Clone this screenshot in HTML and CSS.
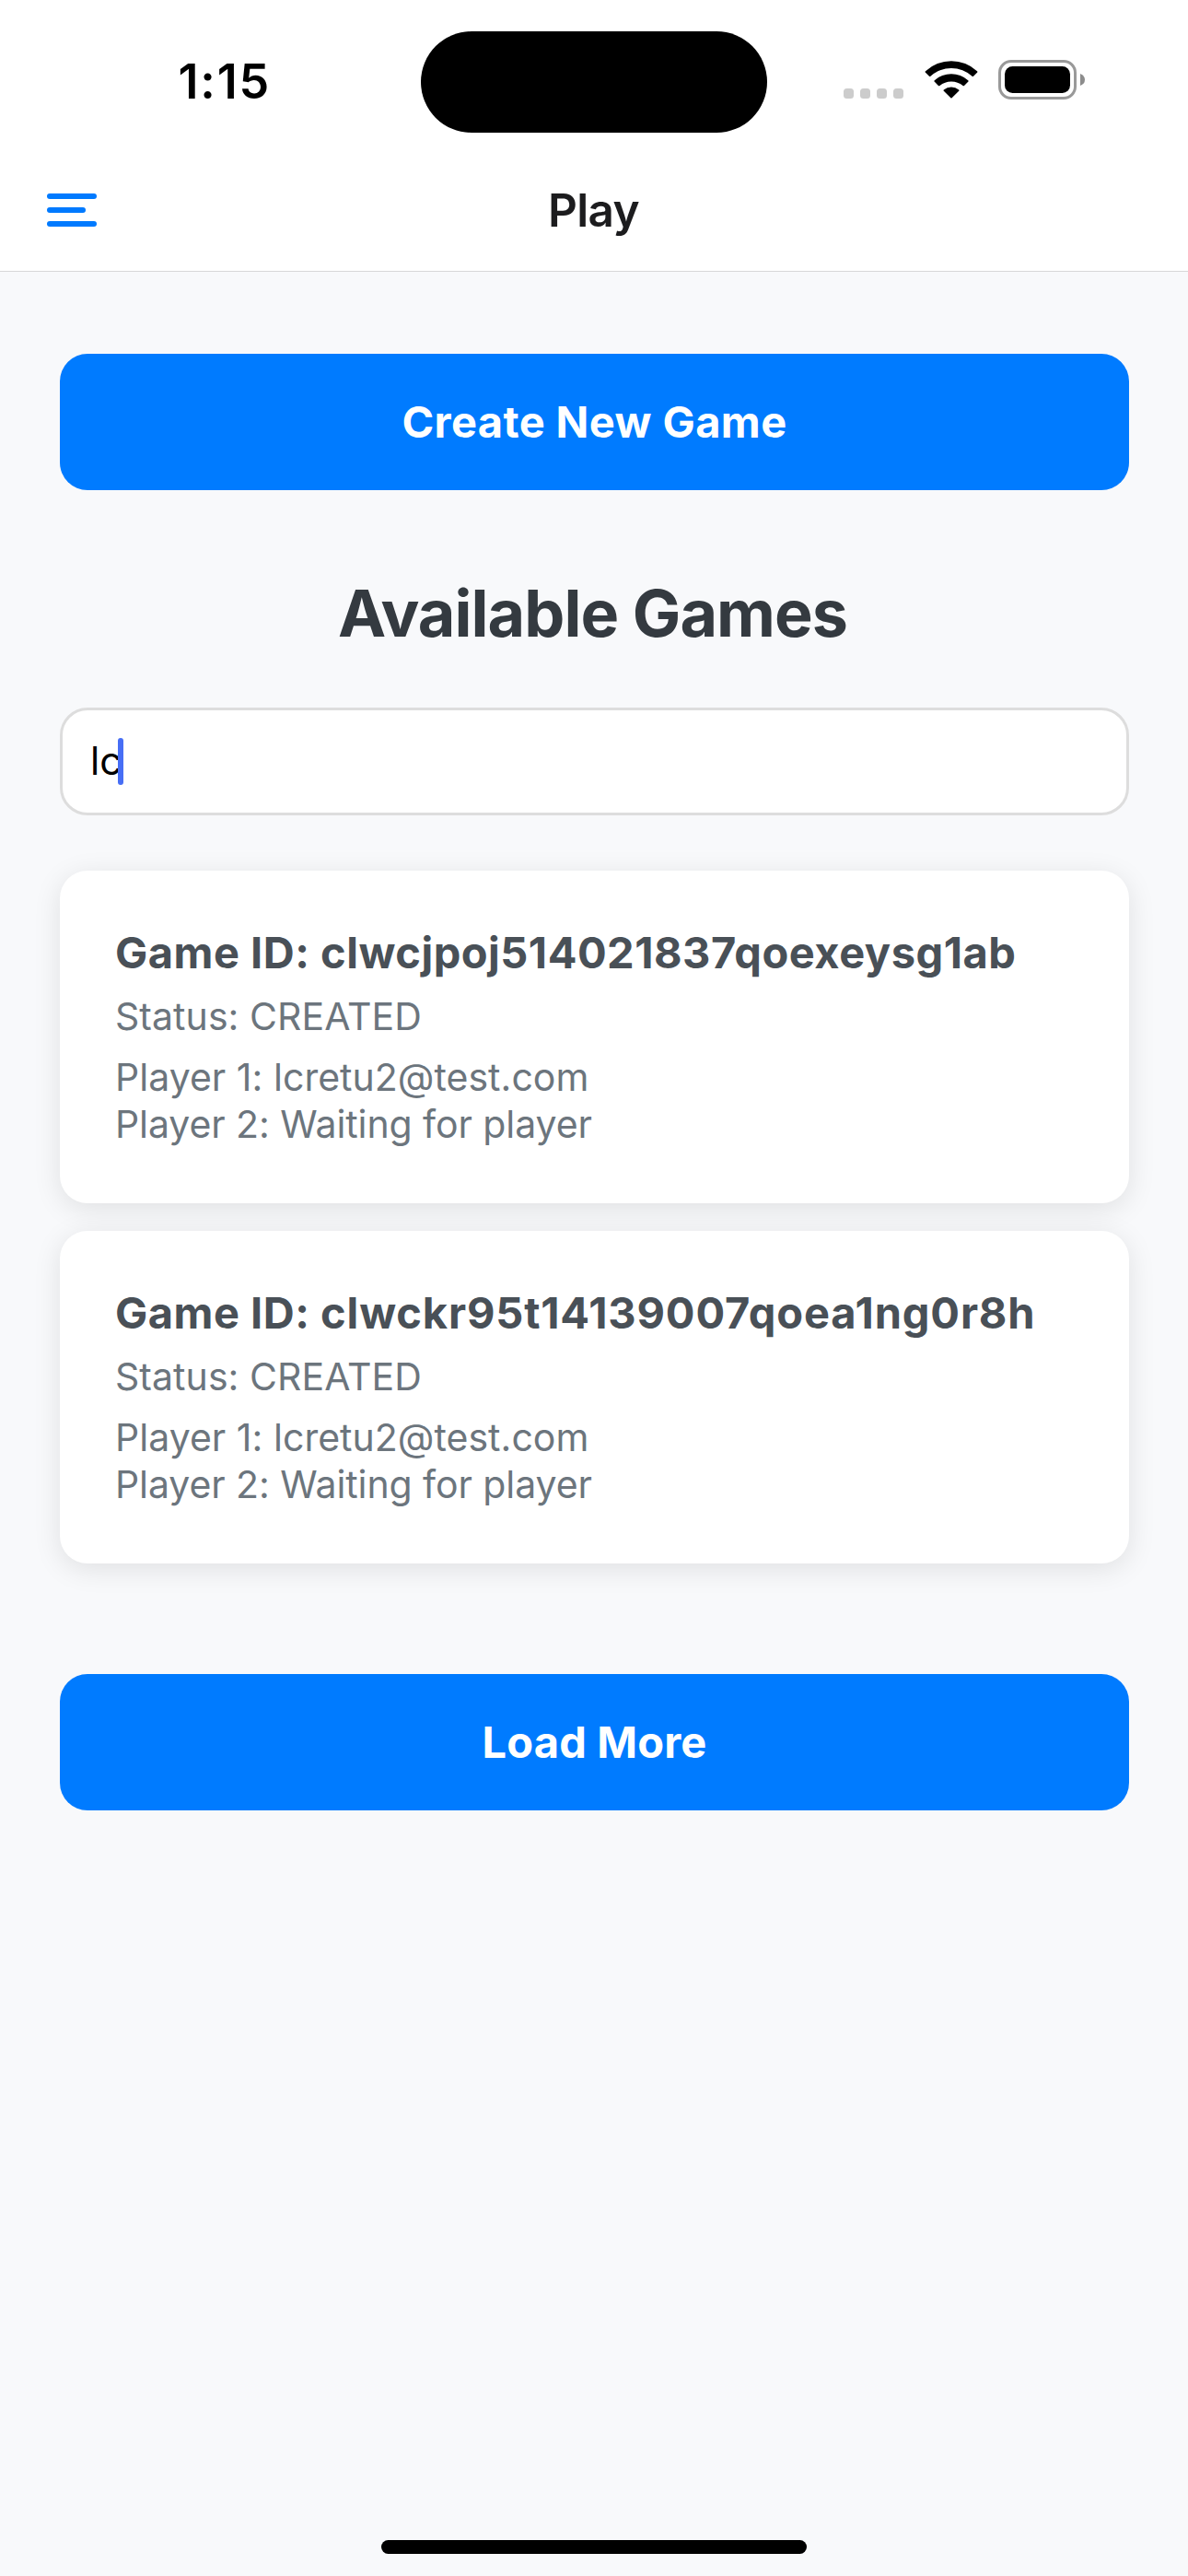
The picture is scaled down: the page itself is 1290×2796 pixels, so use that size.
FILE: index.html
```html
<!DOCTYPE html>
<html lang="en">
<head>
<meta charset="utf-8">
<title>Play</title>
<link rel="stylesheet" href="styles.css">
</head>
<body>
<header class="top">
  <div class="status-bar">
    <span class="time">1:15</span>
    <div class="island"></div>
    <div class="indicators">
      <div class="signal"><i></i><i></i><i></i><i></i></div>
      <svg class="wifi" viewBox="0 0 58 42" width="58" height="42">
        <path d="M1 12.300A41 41 0 0 1 57 12.300Q57.800 13 57 13.800L53 17.800Q52.300 18.400 51.600 17.800A33.500 33.500 0 0 0 6.400 17.800Q5.700 18.400 5 17.800L1 13.800Q.2 13 1 12.300Z"/>
        <path d="M10.800 22.300A27 27 0 0 1 47.200 22.300Q48 23 47.200 23.800L43 28Q42.300 28.600 41.600 28A19.600 19.600 0 0 0 16.400 28Q15.700 28.600 15 28L10.800 23.800Q10 23 10.800 22.300Z"/>
        <path d="M20.800 32.400A13 13 0 0 1 37.200 32.400Q38 33.100 37.200 33.800L29.600 41.300Q29 41.900 28.400 41.300L20.800 33.800Q20 33.100 20.800 32.400Z"/>
      </svg>
      <svg class="battery" viewBox="0 0 94 43" width="94" height="43">
        <rect x="1.500" y="1.500" width="82" height="40" rx="12.500" fill="none" stroke="#999" stroke-width="3"/>
        <rect x="7" y="7" width="71" height="29" rx="8.500"/>
        <path d="M89 15Q94 17 94 21.500Q94 26 89 28Z" fill="#8c8c8c"/>
      </svg>
    </div>
  </div>
  <nav class="nav-bar">
    <div class="menu"><i></i><i class="short"></i><i></i></div>
    <h1 class="nav-title">Play</h1>
  </nav>
</header>
<main class="content">
  <button class="button">Create New Game</button>
  <h2 class="heading">Available Games</h2>
  <div class="search"><span class="query">lc</span><span class="caret"></span></div>
  <section class="games">
    <article class="card">
      <h3 class="game-id">Game ID: clwcjpoj514021837qoexeysg1ab</h3>
      <p class="state">Status: CREATED</p>
      <p class="player">Player 1: lcretu2@test.com</p>
      <p class="player waiting">Player 2: Waiting for player</p>
    </article>
    <article class="card">
      <h3 class="game-id">Game ID: <span class="loose">clwckr95t14139007qoea1ng0r8h</span></h3>
      <p class="state">Status: CREATED</p>
      <p class="player">Player 1: lcretu2@test.com</p>
      <p class="player waiting">Player 2: Waiting for player</p>
    </article>
  </section>
  <button class="button load-more">Load More</button>
</main>
<div class="home-indicator"></div>
</body>
</html>
```
FILE: styles.css
```css
* { box-sizing: border-box; margin: 0; padding: 0; }
body { width: 1290px; height: 2796px; display: flex; flex-direction: column; background: #f8f9fb; font-family: Inter, "Liberation Sans", sans-serif; overflow: hidden; }

.top { height: 295px; background: #fff; border-bottom: 1px solid #d8d8d8; }
.status-bar { height: 177px; display: grid; grid-template-columns: 457px 376px 1fr; }
.time { justify-self: end; margin-right: 163px; padding-top: 57px; font-size: 52px; line-height: 64px; font-weight: 600; letter-spacing: 1.8px; }
.island { width: 376px; height: 110px; margin-top: 34px; border-radius: 55px; background: #000; }
.indicators { display: flex; padding: 65px 0 0 83px; align-items: flex-start; }
.signal { display: flex; gap: 7px; padding-top: 31px; margin-right: 23px; }
.signal i { width: 11px; height: 11px; border-radius: 3.5px; background: #ccc; }
.wifi { margin-right: 22px; }

.nav-bar { height: 117px; display: grid; grid-template-columns: 1fr auto 1fr; padding: 0 51px; }
.menu { display: flex; flex-direction: column; gap: 9px; padding-top: 33px; }
.menu i { width: 54px; height: 6px; border-radius: 3px; background: #007aff; }
.menu .short { width: 42px; }
.nav-title { padding: 21px 1px 0 0; font-size: 49.5px; line-height: 60px; font-weight: 600; letter-spacing: -.7px; color: #1c1c1e; }

.content { flex: 1; display: flex; flex-direction: column; padding: 89px 64px 0 65px; }
.button { height: 148px; flex: none; border: 0; border-radius: 30px; background: #007bff; color: #fff; font: 700 47px/58px Inter, "Liberation Sans", sans-serif; letter-spacing: .4px; }
.load-more { letter-spacing: .15px; }
.heading { margin-top: 91px; padding-right: 4px; text-align: center; font-size: 70px; line-height: 86px; letter-spacing: -.95px; color: #343a40; }
.search { height: 117px; margin-top: 59px; display: flex; align-items: center; border: 3px solid #ddd; border-radius: 30px; background: #fff; padding-left: 30px; }
.query { padding-bottom: 2px; font-size: 42px; }
.caret { width: 6px; height: 51px; border-radius: 3px; background: #476ef5; margin-left: -4px; }

.games { display: flex; flex-direction: column; gap: 30px; margin: 60px 0 120px; }
.card { height: 361px; padding: 60px; border-radius: 30px; background: #fff; box-shadow: 0 6px 30px rgba(0, 0, 0, .1); }
.game-id { font-size: 47px; line-height: 58px; letter-spacing: .5px; color: #495057; white-space: nowrap; }
.loose { letter-spacing: .85px; }
.state { margin: 15px 0; font-size: 41px; line-height: 51px; letter-spacing: .06px; color: #6c757d; }
.player { font-size: 41px; line-height: 51px; letter-spacing: .03px; color: #6c757d; }
.player.waiting { letter-spacing: -.08px; }

.home-indicator { width: 462px; height: 15px; margin: 0 auto 24px; border-radius: 8px; background: #000; }
```
